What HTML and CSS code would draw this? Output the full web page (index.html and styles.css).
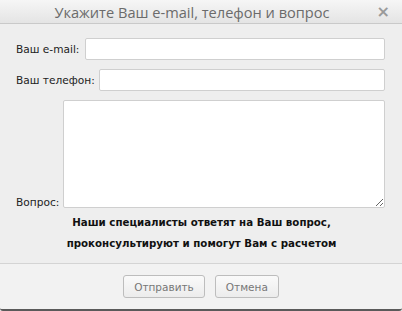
FILE: index.html
```html
<!DOCTYPE html>
<html lang="ru">
<head>
  <meta charset="UTF-8" />
  <meta name="viewport" content="width=device-width, initial-scale=1.0" />
  <title>Обратная связь</title>
  <link rel="stylesheet" href="styles.css">
</head>
<body>
  <div class="dialog">
    <div class="dialog-title">
      Укажите Ваш e-mail, телефон и вопрос
      <span class="dialog-close">&times;</span>
    </div>
    <div class="dialog-body">
      <div class="row">
        <label for="email" class="label-email">Ваш e-mail:</label>
        <input type="text" id="email" />
      </div>
      <div class="row">
        <label for="phone">Ваш телефон:</label>
        <input type="text" id="phone" />
      </div>
      <div class="row row-question">
        <label for="question">Вопрос:</label>
        <textarea id="question"></textarea>
      </div>
      <div class="note">
        Наши специалисты ответят на Ваш вопрос,<br>
        проконсультируют и помогут Вам с расчетом
      </div>
    </div>
    <div class="dialog-footer">
      <button>Отправить</button>
      <button>Отмена</button>
    </div>
  </div>
</body>
</html>
```

FILE: styles.css
```css
body {
  margin: 0;
  font-family: "DejaVu Sans", Verdana, sans-serif;
  font-size: 10.6px;
  color: #222;
  background: #eee;
}
.dialog {
  width: 402px;
  height: 311px;
  display: flex;
  flex-direction: column;
  box-sizing: border-box;
  border-bottom: 2px solid #5a5a5a;
  border-radius: 0 0 3px 3px;
  overflow: hidden;
}
.dialog-title {
  position: relative;
  height: 23px;
  line-height: 24px;
  text-align: center;
  font-family: "Open Sans", sans-serif;
  font-size: 14.6px;
  color: #6b6b6b;
  background: linear-gradient(#f6f6f6, #e4e4e4);
  border-bottom: 1px solid #c9c9c9;
  padding-right: 18px;
}
.dialog-close {
  position: absolute;
  right: 12px;
  top: 0;
  font-family: "DejaVu Sans", sans-serif;
  font-size: 16px;
  font-weight: bold;
  color: #9a9a9a;
}
.dialog-body {
  flex: 1;
  background: #eeeeee;
  padding: 14px 17px 0 16px;
}
.row {
  display: flex;
  align-items: center;
  margin-bottom: 9px;
}
.row label {
  margin-right: 4px;
  white-space: nowrap;
}
.row .label-email {
  margin-right: 6px;
}
.row input,
.row textarea {
  flex: 1;
  height: 22px;
  box-sizing: border-box;
  border: 1px solid #cfcfcf;
  border-radius: 2px;
  background: #fff;
  font: inherit;
  padding: 2px 4px;
  margin: 0;
}
.row-question {
  align-items: flex-end;
}
.row-question textarea {
  height: 108px;
  resize: both;
}
.note {
  text-align: center;
  font-weight: bold;
  font-size: 10.25px;
  line-height: 21px;
  color: #111;
  margin-top: -5px;
  padding-left: 2px;
}
.dialog-footer {
  height: 45px;
  background: #f2f2f2;
  border-top: 1px solid #d4d4d4;
  display: flex;
  align-items: center;
  justify-content: center;
  gap: 10px;
}
.dialog-footer button {
  height: 23px;
  padding: 0 10px;
  font-family: "DejaVu Sans", Verdana, sans-serif;
  font-size: 10.5px;
  color: #777;
  background: linear-gradient(#fafafa, #ececec);
  border: 1px solid #bdbdbd;
  border-radius: 3px;
  cursor: pointer;
}
```
